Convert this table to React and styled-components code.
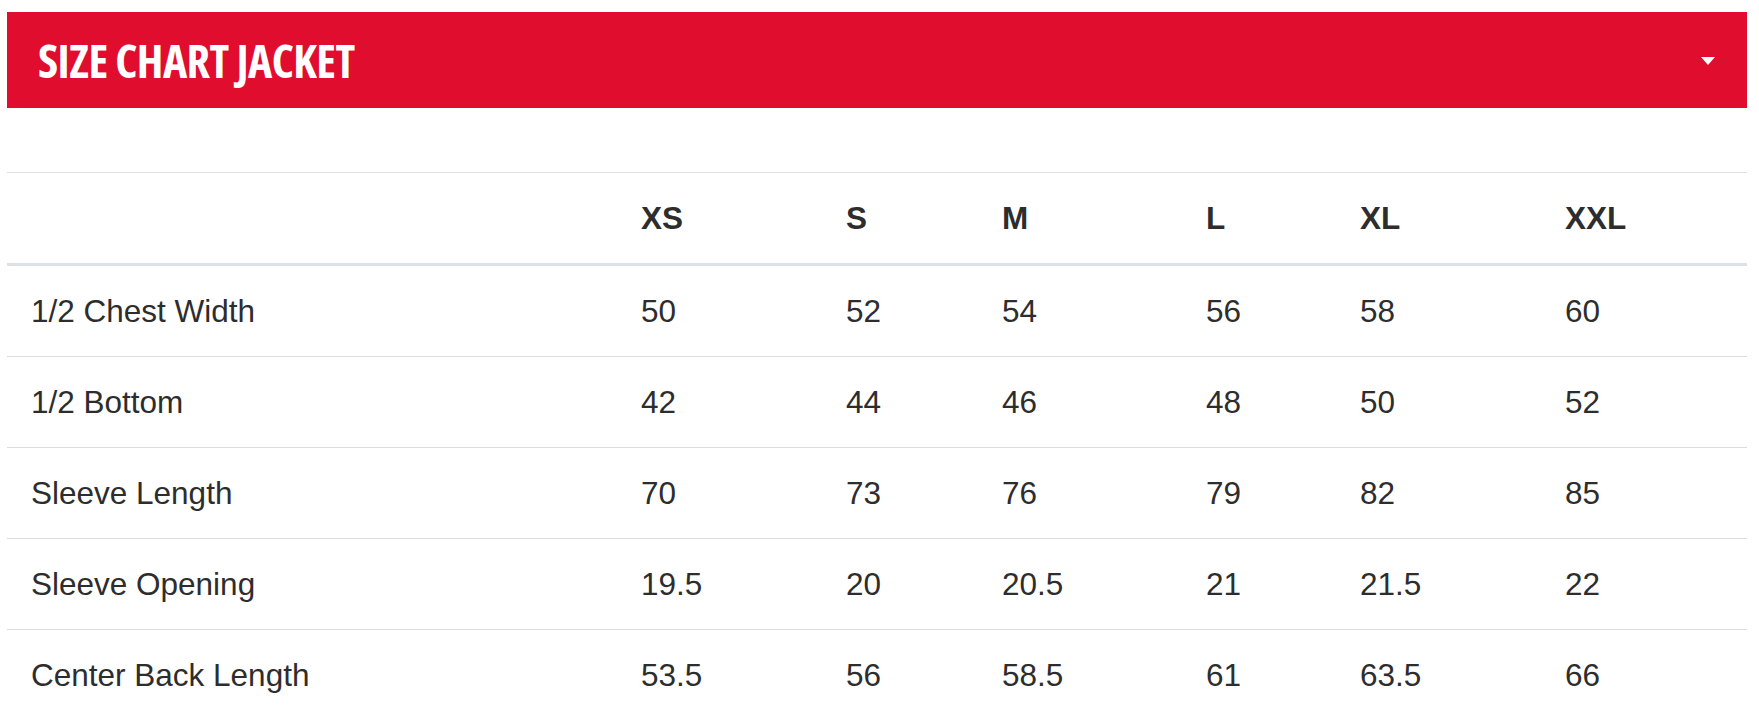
import React from "react";
import styled, { createGlobalStyle } from "styled-components";

const GlobalStyle = createGlobalStyle`
  html, body {
    margin: 0;
    padding: 0;
    background: #ffffff;
  }
  body {
    font-family: "Liberation Sans", Arial, sans-serif;
    color: #333333;
  }
`;

const Page = styled.div`
  padding: 12px 12px 0 7px;
`;

const Accordion = styled.section`
  display: flex;
  flex-direction: column;
  gap: 64px;
`;

const TitleBar = styled.header`
  height: 96px;
  background: #e00d2e;
  display: flex;
  align-items: center;
  justify-content: space-between;
  padding: 0 32px 0 31px;
  box-sizing: border-box;
`;

const Title = styled.h2`
  margin: 0;
  font-family: "Open Sans", "Liberation Sans", sans-serif;
  font-weight: 700;
  font-size: 46px;
  line-height: 1;
  font-stretch: 75%;
  color: #ffffff;
  letter-spacing: -0.55px;
  text-transform: uppercase;
`;

const Caret = styled.span`
  width: 0;
  height: 0;
  border-left: 7.5px solid transparent;
  border-right: 7.5px solid transparent;
  border-top: 8px solid #ffffff;
  margin-top: 1px;
`;

const Table = styled.table`
  width: 100%;
  border-collapse: collapse;
  table-layout: fixed;
  border-top: 1px solid #dde1e6;
`;

const Col = styled.col`
  width: ${(p) => p.$w}px;
`;

const HeadCell = styled.th`
  height: 90px;
  padding: 0 0 0 24px;
  text-align: left;
  vertical-align: middle;
  font-size: 31.5px;
  font-weight: 700;
  color: #2d2d2d;
  border-bottom: 3px solid #dde1e6;
`;

const Row = styled.tr`
  border-bottom: 1px solid #d9dde2;
`;

const Cell = styled.td`
  height: 90px;
  padding: 0 0 0 24px;
  text-align: left;
  vertical-align: middle;
  font-size: 31.5px;
  font-weight: 400;
  color: #2d2d2d;
  white-space: nowrap;
`;

const colWidths = [610, 205, 156, 204, 154, 205, 206];
const sizes = ["XS", "S", "M", "L", "XL", "XXL"];
const rows = [
  ["1/2 Chest Width", "50", "52", "54", "56", "58", "60"],
  ["1/2 Bottom", "42", "44", "46", "48", "50", "52"],
  ["Sleeve Length", "70", "73", "76", "79", "82", "85"],
  ["Sleeve Opening", "19.5", "20", "20.5", "21", "21.5", "22"],
  ["Center Back Length", "53.5", "56", "58.5", "61", "63.5", "66"],
];

export default function App() {
  return (
    <>
      <GlobalStyle />
      <Page>
        <Accordion>
          <TitleBar>
            <Title>Size Chart Jacket</Title>
            <Caret />
          </TitleBar>
          <Table>
            <colgroup>
              {colWidths.map((w, i) => (
                <Col key={i} $w={w} />
              ))}
            </colgroup>
            <thead>
              <tr>
                <HeadCell />
                {sizes.map((s) => (
                  <HeadCell key={s}>{s}</HeadCell>
                ))}
              </tr>
            </thead>
            <tbody>
              {rows.map((r) => (
                <Row key={r[0]}>
                  {r.map((c, i) => (
                    <Cell key={i}>{c}</Cell>
                  ))}
                </Row>
              ))}
            </tbody>
          </Table>
        </Accordion>
      </Page>
    </>
  );
}
